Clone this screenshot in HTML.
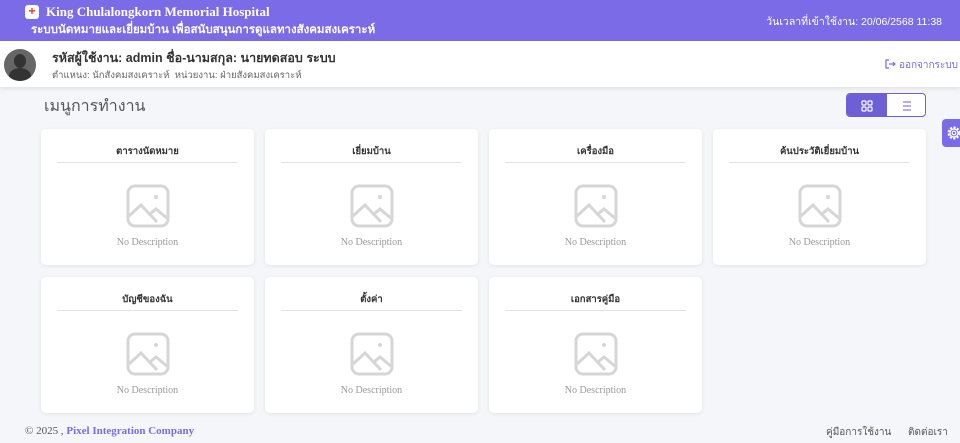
<!DOCTYPE html>
<html><head><meta charset="utf-8"><style>
*{box-sizing:border-box;margin:0;padding:0}
body{width:960px;height:443px;overflow:hidden;background:#f5f6f9;font-family:"Liberation Serif","Noto Serif CJK SC",serif;position:relative}
.hdr{position:absolute;left:0;top:0;width:960px;height:41px;background:#7b6be6;color:#fff}
.logo{position:absolute;left:25px;top:5px;width:14px;height:14px;background:#fff;border-radius:3px;color:#e33;font-size:12px;line-height:13px;text-align:center;font-weight:bold;font-family:"Liberation Sans",sans-serif}
.t1{position:absolute;left:46px;top:4px;font-size:13px;font-weight:bold}
.t2{position:absolute;left:31px;top:21px;font-size:11.5px;font-weight:bold;font-family:"Liberation Sans","Noto Sans CJK SC",sans-serif}
.dt{position:absolute;right:18px;top:13px;font-size:10.5px;font-family:"Liberation Sans","Noto Sans CJK SC",sans-serif}
.ub{position:absolute;left:0;top:41px;width:960px;height:46px;background:#fff;box-shadow:0 2px 4px rgba(0,0,0,.08)}
.av{position:absolute;left:4px;top:8px;width:32px;height:32px;border-radius:50%;background:#666;overflow:hidden}
.av:before{content:"";position:absolute;left:10px;top:5px;width:12px;height:14px;border-radius:50%;background:#333}
.av:after{content:"";position:absolute;left:5px;top:19px;width:22px;height:16px;border-radius:50% 50% 0 0;background:#333}
.u1{position:absolute;left:52px;top:7px;font-size:12.5px;font-weight:bold;color:#333;font-family:"Liberation Sans","Noto Sans CJK SC",sans-serif}
.u2{position:absolute;left:52px;top:27px;font-size:9.5px;color:#666;font-family:"Liberation Sans","Noto Sans CJK SC",sans-serif}
.lo{position:absolute;right:2px;top:17px;font-size:10px;color:#7b6be6;font-family:"Liberation Sans","Noto Sans CJK SC",sans-serif}
.mt{position:absolute;left:44px;top:94px;font-size:16px;color:#555;font-family:"Liberation Sans","Noto Sans CJK SC",sans-serif}
.tg{position:absolute;left:846px;top:93px;width:80px;height:24px;border:1px solid #6e5fd6;border-radius:4px;overflow:hidden;background:#fff}
.tg .a{position:absolute;left:0;top:0;width:40px;height:24px;background:#6e5fd6}
.gear{position:absolute;left:942px;top:119px;width:24px;height:28px;background:#7b6be6;border-radius:4px}
.card{position:absolute;width:213px;height:136px;background:#fff;border-radius:5px;box-shadow:0 1px 4px rgba(0,0,0,.08)}
.card .h{position:absolute;left:16px;right:16px;top:15px;height:19px;border-bottom:1px solid #e3e3e3;text-align:center;font-size:9.5px;font-weight:bold;color:#333;font-family:"Liberation Sans","Noto Sans CJK SC",sans-serif}
.card svg{position:absolute;left:85px;top:55px}
.card .d{position:absolute;left:0;right:0;top:108px;text-align:center;font-size:10px;color:#999}
.ft{position:absolute;top:425px;font-size:11px;color:#555}
</style></head><body>
<div class="hdr"><div class="logo">+</div><div class="t1">King Chulalongkorn Memorial Hospital</div><div class="t2">ระบบนัดหมายและเยี่ยมบ้าน เพื่อสนับสนุนการดูแลทางสังคมสงเคราะห์</div><div class="dt">วันเวลาที่เข้าใช้งาน: 20/06/2568 11:38</div></div>
<div class="ub"><div class="av"></div><div class="u1">รหัสผู้ใช้งาน: admin ชื่อ-นามสกุล: นายทดสอบ ระบบ</div><div class="u2">ตำแหนง: นักสังคมสงเคราะห์ &nbsp;หน่วยงาน: ฝ่ายสังคมสงเคราะห์</div><div class="lo"><svg width="12" height="12" style="vertical-align:-2px"><path d="M5 2H2v8h3M5 6h6M9 4l2 2-2 2" fill="none" stroke="#7b6be6" stroke-width="1.2"/></svg> ออกจากระบบ</div></div>
<div class="mt">เมนูการทำงาน</div>
<div class="tg"><div class="a"><svg width="40" height="24"><g fill="none" stroke="#fff" stroke-width="1.2"><rect x="15" y="7" width="4" height="4" rx="1"/><rect x="21" y="7" width="4" height="4" rx="1"/><rect x="15" y="13" width="4" height="4" rx="1"/><rect x="21" y="13" width="4" height="4" rx="1"/></g></svg></div><svg style="position:absolute;left:40px;top:0" width="40" height="24"><g stroke="#6e5fd6" stroke-width="1"><line x1="16" y1="8" x2="24" y2="8"/><line x1="16" y1="12" x2="24" y2="12"/><line x1="16" y1="16" x2="24" y2="16"/></g></svg></div>
<div class="gear"><svg width="24" height="28"><circle cx="12" cy="14" r="5.5" fill="none" stroke="#fff" stroke-width="2" stroke-dasharray="2.2 1.4"/><circle cx="12" cy="14" r="4" fill="none" stroke="#fff" stroke-width="1.2"/><circle cx="12" cy="14" r="1.8" fill="none" stroke="#fff" stroke-width="1.2"/></svg></div>

<div class="card" style="left:41px;top:129px"><div class="h">ตารางนัดหมาย</div><svg width="44" height="44"><g fill="none" stroke="#d6d6d6" stroke-width="3"><rect x="2" y="2" width="40" height="40" rx="7"/><path d="M3 32l12-11 16 17M24 30l6-5 12 10"/></g><circle cx="30" cy="13" r="2" fill="#d6d6d6"/></svg><div class="d">No Description</div></div>
<div class="card" style="left:265px;top:129px"><div class="h">เยี่ยมบ้าน</div><svg width="44" height="44"><g fill="none" stroke="#d6d6d6" stroke-width="3"><rect x="2" y="2" width="40" height="40" rx="7"/><path d="M3 32l12-11 16 17M24 30l6-5 12 10"/></g><circle cx="30" cy="13" r="2" fill="#d6d6d6"/></svg><div class="d">No Description</div></div>
<div class="card" style="left:489px;top:129px"><div class="h">เครื่องมือ</div><svg width="44" height="44"><g fill="none" stroke="#d6d6d6" stroke-width="3"><rect x="2" y="2" width="40" height="40" rx="7"/><path d="M3 32l12-11 16 17M24 30l6-5 12 10"/></g><circle cx="30" cy="13" r="2" fill="#d6d6d6"/></svg><div class="d">No Description</div></div>
<div class="card" style="left:713px;top:129px"><div class="h">ค้นประวัติเยี่ยมบ้าน</div><svg width="44" height="44"><g fill="none" stroke="#d6d6d6" stroke-width="3"><rect x="2" y="2" width="40" height="40" rx="7"/><path d="M3 32l12-11 16 17M24 30l6-5 12 10"/></g><circle cx="30" cy="13" r="2" fill="#d6d6d6"/></svg><div class="d">No Description</div></div>
<div class="card" style="left:41px;top:277px"><div class="h">บัญชีของฉัน</div><svg width="44" height="44"><g fill="none" stroke="#d6d6d6" stroke-width="3"><rect x="2" y="2" width="40" height="40" rx="7"/><path d="M3 32l12-11 16 17M24 30l6-5 12 10"/></g><circle cx="30" cy="13" r="2" fill="#d6d6d6"/></svg><div class="d">No Description</div></div>
<div class="card" style="left:265px;top:277px"><div class="h">ตั้งค่า</div><svg width="44" height="44"><g fill="none" stroke="#d6d6d6" stroke-width="3"><rect x="2" y="2" width="40" height="40" rx="7"/><path d="M3 32l12-11 16 17M24 30l6-5 12 10"/></g><circle cx="30" cy="13" r="2" fill="#d6d6d6"/></svg><div class="d">No Description</div></div>
<div class="card" style="left:489px;top:277px"><div class="h">เอกสารคู่มือ</div><svg width="44" height="44"><g fill="none" stroke="#d6d6d6" stroke-width="3"><rect x="2" y="2" width="40" height="40" rx="7"/><path d="M3 32l12-11 16 17M24 30l6-5 12 10"/></g><circle cx="30" cy="13" r="2" fill="#d6d6d6"/></svg><div class="d">No Description</div></div>

<div class="ft" style="left:25px">© 2025 , <b style="color:#7b6be6">Pixel Integration Company</b></div>
<div class="ft" style="left:826px;font-family:'Liberation Sans','Noto Sans CJK SC',sans-serif;font-size:10px">คู่มือการใช้งาน &nbsp;&nbsp;&nbsp;&nbsp; ติดต่อเรา</div>
</body></html>
